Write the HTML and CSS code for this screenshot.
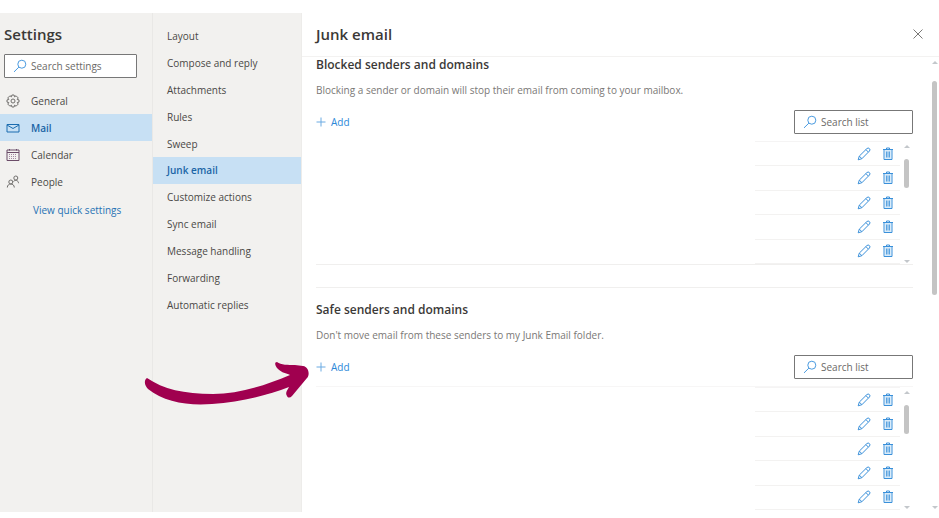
FILE: index.html
```html
<!DOCTYPE html>
<html lang="en">
<head>
  <meta charset="UTF-8">
  <title>Settings - Junk email</title>
  <meta name="viewport" content="width=device-width,initial-scale=1">
  <link rel="stylesheet" href="styles.css">
</head>
<body>
  <svg class="sprite" aria-hidden="true">
    <symbol id="i-search" viewBox="0 0 14 14"><circle cx="8.8" cy="5.2" r="4"/><path d="M5.900 8.100L1 12.900"/></symbol>
    <symbol id="i-plus" viewBox="0 0 10 10"><path d="M5 .5v9M.5 5h9"/></symbol>
    <symbol id="i-edit" viewBox="0 0 14 14"><path d="M1.200 12.800l1.100-3.700 7.600-7.500a1.500 1.500 0 0 1 2.500 2.500l-7.500 7.600zM2.300 9.100l2.600 2.600M8.900 2.600l2.500 2.500"/></symbol>
    <symbol id="i-trash" viewBox="0 0 12 14"><path class="bin" d="M2.500 3h7v9.500h-7z"/><path d="M1 2.500h10M4.500 2.500V1h3v1.500M2 2.500v10h8v-10"/><path class="slats" d="M4.500 4.500v6M6 4.500v6M7.500 4.500v6"/></symbol>
  </svg>

  <div class="settings">
    <div class="sidebar">
      <h1 class="title">Settings</h1>
      <label class="search">
        <svg class="icon"><use href="#i-search"/></svg>
        <input type="search" placeholder="Search settings" aria-label="Search settings">
      </label>
      <nav class="menu">
        <a href="#">
          <svg class="icon" viewBox="0 0 14 14"><circle cx="7" cy="7" r="2"/><path d="M5.9 1L8.1 1 8.5 2.8 10.1 1.8 12.2 3.9 11.2 5.5 13 5.9 13 8.1 11.2 8.5 12.2 10.1 10.1 12.2 8.5 11.2 8.1 13 5.9 13 5.5 11.2 3.9 12.2 1.8 10.1 2.8 8.5 1 8.1 1 5.9 2.8 5.5 1.8 3.9 3.9 1.8 5.5 2.8z"/></svg>
          General
        </a>
        <a href="#" class="active">
          <svg class="icon" viewBox="0 0 14 14"><path d="M1 3.500h12v7.500H1zM1 4l6 3.500L13 4"/></svg>
          Mail
        </a>
        <a href="#">
          <svg class="icon calendar" viewBox="0 0 14 14"><path d="M1 2h12v10.500H1zM1 4.500h12M3.500 1v1.500M10.500 1v1.500"/><path class="days" d="M3 6.500h8M3 8.500h8M3 10.500h8"/></svg>
          Calendar
        </a>
        <a href="#">
          <svg class="icon" viewBox="0 0 14 14"><circle cx="4.800" cy="7" r="2"/><path d="M1.300 12.500c0-4.700 7-4.700 7 0M7.500 6.500c1.500-2 5-1.300 5 1.700"/><circle cx="9.800" cy="3" r="2"/></svg>
          People
        </a>
        <a href="#" class="quick">View quick settings</a>
      </nav>
    </div>

    <div class="subnav">
      <nav class="submenu">
        <a href="#">Layout</a>
        <a href="#">Compose and reply</a>
        <a href="#">Attachments</a>
        <a href="#">Rules</a>
        <a href="#">Sweep</a>
        <a href="#" class="active">Junk email</a>
        <a href="#">Customize actions</a>
        <a href="#">Sync email</a>
        <a href="#">Message handling</a>
        <a href="#">Forwarding</a>
        <a href="#">Automatic replies</a>
      </nav>
    </div>

    <main class="panel">
      <header class="panel-head">
        <h2 class="title">Junk email</h2>
        <button class="close" aria-label="Close"><svg class="icon" viewBox="0 0 10 10"><path d="M.5.5l9 9M9.500.5l-9 9"/></svg></button>
      </header>
      <div class="panel-body">
        <div class="content">
          <section>
            <h3>Blocked senders and domains</h3>
            <p>Blocking a sender or domain will stop their email from coming to your mailbox.</p>
            <div class="toolbar">
              <button class="add"><svg class="icon"><use href="#i-plus"/></svg>Add</button>
              <label class="search list-search">
                <svg class="icon"><use href="#i-search"/></svg>
                <input type="search" placeholder="Search list" aria-label="Search blocked senders">
              </label>
            </div>
            <div class="list">
              <ul class="rows"></ul>
              <div class="scrollbar"><i class="up"></i><i class="thumb"></i><i class="down"></i></div>
            </div>
          </section>
          <section>
            <h3>Safe senders and domains</h3>
            <p>Don't move email from these senders to my Junk Email folder.</p>
            <div class="toolbar">
              <button class="add"><svg class="icon"><use href="#i-plus"/></svg>Add</button>
              <label class="search list-search">
                <svg class="icon"><use href="#i-search"/></svg>
                <input type="search" placeholder="Search list" aria-label="Search safe senders">
              </label>
            </div>
            <div class="list">
              <ul class="rows"></ul>
              <div class="scrollbar"><i class="up"></i><i class="thumb"></i><i class="down"></i></div>
            </div>
          </section>
        </div>
        <div class="scrollbar page-scroll"><i class="up"></i><i class="thumb"></i><i class="down"></i></div>
      </div>
    </main>

    <svg class="arrow" viewBox="0 0 166 44" aria-hidden="true"><path d="M3 16C0 18 0 23 4 27C20 40 44 44 68 42C97 40 124 33 145 25C143 29 141 31 143 34C144 36 146 36 148 34L163 16C166 13 165 5 159 4L151 3C144 3 137 3 133 0C130 0 131 4 134 7C138 11 142 11 146 13C120 24 94 32 69 32C40 32 19 27 3 16Z"/></svg>
  </div>

  <script>
    const row = `<li>
      <button aria-label="Edit"><svg class="icon"><use href="#i-edit"/></svg></button>
      <button aria-label="Delete"><svg class="icon"><use href="#i-trash"/></svg></button>
    </li>`;
    document.querySelectorAll('.rows').forEach(list => {
      list.innerHTML = row.repeat(5);
    });
  </script>
</body>
</html>
```
FILE: styles.css
```css
* { box-sizing: border-box; }
body { margin: 0; padding: 13px 0 6px; height: 100vh; background: #fff; color: #4a4846; font: 10px/16px "Open Sans", "Noto Sans", sans-serif; }
h1, h2, h3, p, ul { margin: 0; padding: 0; font-weight: normal; }
a { color: inherit; text-decoration: none; }
button { background: none; border: none; padding: 0; font: inherit; color: inherit; cursor: pointer; display: flex; align-items: center; }
.sprite { position: absolute; width: 0; height: 0; }
.icon { width: 14px; height: 14px; flex: none; fill: none; stroke: currentColor; stroke-width: 1; }

.settings { position: relative; display: flex; height: 100%; }
.title { font-size: 15px; line-height: 22px; font-weight: 600; color: #3b3937; }

.sidebar { width: 153px; background: #f2f1ef; border-right: 1px solid #e9e8e6; padding-top: 10px; flex: none; }
.sidebar .title { padding-left: 4px; }
.search { display: flex; align-items: center; gap: 5px; height: 24px; padding-left: 8px; background: #fff; border: 1px solid #777; border-radius: 1px; color: #4a9be0; }
.search input { width: 100%; min-width: 0; border: none; outline: none; padding: 0; background: none; font: inherit; color: #4a4846; }
.search input::placeholder { color: #6b6967; opacity: 1; }
.sidebar .search { margin: 9px 15px 0 4px; gap: 4px; }
.menu { display: flex; flex-direction: column; padding-top: 9px; }
.menu a { display: flex; align-items: center; gap: 11px; height: 27px; padding-left: 6px; }
.menu .icon { stroke: #706e6c; }
.menu .active .icon { stroke: #1a6cb0; }
.menu .calendar { stroke: #6b4c68; }
.menu .days { stroke: #a389a3; stroke-dasharray: 1 1; }
.menu .quick { padding-left: 33px; height: 30px; color: #2672b4; }
.active { background: #c7e0f4; color: #1a65a6; font-weight: 600; }

.subnav { width: 149px; flex: none; padding-top: 10px; background: #f2f1ef; border-right: 1px solid #edecea; }
.submenu { display: grid; grid-auto-rows: 1fr; height: 295px; }
.submenu a { display: flex; align-items: center; padding-left: 14px; }

.panel { flex: 1; min-width: 0; display: flex; flex-direction: column; }
.panel-head { display: flex; justify-content: space-between; align-items: center; height: 44px; flex: none; padding: 0 16px 2px 14px; border-bottom: 1px solid #f3f2f1; }
.close { color: #7a7876; }
.close .icon { width: 10px; height: 10px; }
.panel-body { display: flex; flex: 1; min-height: 0; }
.content { flex: 1; overflow: hidden; padding-left: 14px; }
section h3 { font-size: 12px; line-height: 16px; font-weight: 600; color: #3b3937; }
section p { padding-top: 9px; color: #7a7876; }
section + section { margin-top: 22px; padding-top: 14px; border-top: 1px solid #f0efee; }
.toolbar { display: flex; justify-content: space-between; align-items: center; margin-top: 12px; height: 24px; }
.add { gap: 5px; color: #2b88d8; }
.add .icon { width: 10px; height: 10px; stroke: #6aaae2; }
.list-search { width: 119px; gap: 4px; }

.list { display: flex; justify-content: flex-end; margin-top: 7px; height: 124px; border-bottom: 1px solid #f0efee; }
section + section .list { border-top: 1px solid #f7f6f6; border-bottom: none; }
.rows { display: flex; flex-direction: column; width: 145px; list-style: none; border-top: 1px solid #f5f4f4; }
.rows li { flex: 1; display: flex; justify-content: flex-end; align-items: center; gap: 10px; padding-right: 5px; border-bottom: 1px solid #f3f2f1; color: #3a90da; }
.bin { fill: #d9ebf9; stroke: none; }
.slats { stroke: #5ba3e0; }
.scrollbar { width: 13px; display: flex; flex-direction: column; align-items: center; padding: 4px 0 1px; }
.up, .down { border: 3px solid transparent; }
.up { border-top: none; border-bottom-color: #c3c7cb; }
.down { margin-top: auto; border-bottom: none; border-top-color: #c3c7cb; }
.thumb { width: 5px; height: 29px; margin-top: 11px; border-radius: 3px; background: #c4c4c4; }
.page-scroll { width: 26px; padding: 4px 1px 3px 18px; }
.page-scroll .thumb { height: 214px; margin-top: 17px; }

.arrow { position: absolute; left: 144px; top: 349px; width: 166px; height: 44px; fill: #a0004f; }
```
